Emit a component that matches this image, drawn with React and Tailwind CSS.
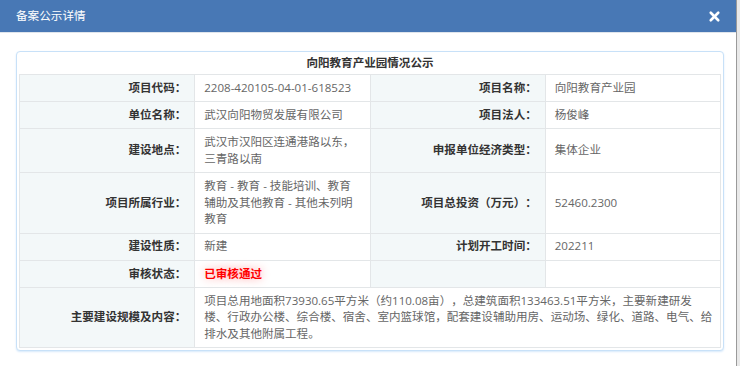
import { X } from 'lucide-react';

const rows = [
  [
    { label: '项目代码：', value: '2208-420105-04-01-618523' },
    { label: '项目名称：', value: '向阳教育产业园' },
  ],
  [
    { label: '单位名称：', value: '武汉向阳物贸发展有限公司' },
    { label: '项目法人：', value: '杨俊峰' },
  ],
  [
    { label: '建设地点：', value: '武汉市汉阳区连通港路以东，三青路以南' },
    { label: '申报单位经济类型：', value: '集体企业' },
  ],
  [
    { label: '项目所属行业：', value: '教育 - 教育 - 技能培训、教育辅助及其他教育 - 其他未列明教育' },
    { label: '项目总投资（万元）：', value: '52460.2300' },
  ],
  [
    { label: '建设性质：', value: '新建' },
    { label: '计划开工时间：', value: '202211' },
  ],
];

const labelCls =
  'border border-[#e3e6e8] bg-[#f3f8f9] px-[8px] py-[4.8px] text-right font-bold text-[#333] align-middle';
const valueCls =
  'border border-[#e3e6e8] bg-white pl-[9px] pr-[15px] py-[4.8px] text-left text-[#666] align-middle';

export default function App() {
  return (
    <div
      className="flex h-[366px] w-[740px] bg-[#e9e9e9] text-[11.55px] leading-[16.6px] [text-spacing-trim:space-all]"
      style={{ fontFamily: '"Open Sans", "Noto Sans CJK SC", sans-serif' }}
    >
      <div className="flex h-full w-[737px] flex-col border-r border-[#9a9a9a] bg-white">
        {/* Header */}
        <div className="flex h-[33px] shrink-0 items-center justify-between border-b border-[#dfe5ec] bg-[#4878b5] pl-[16px] pr-[14px]">
          <span className="text-[11.6px] text-white">备案公示详情</span>
          <X className="h-[15px] w-[15px] text-white" strokeWidth={4.2} />
        </div>

        {/* Body */}
        <div className="pl-[16px] pt-[18px]">
          <div className="w-[708px] rounded-[4px] border border-[#c8e1f8] bg-white px-[2px] pb-[2px] shadow-[0_1px_2px_#d7e9fb]">
            <div className="flex h-[22px] items-center justify-center font-bold text-[#333]">
              向阳教育产业园情况公示
            </div>
            <table className="w-[702px] table-fixed border-collapse">
              <tbody>
                {rows.map((r, i) => (
                  <tr key={i}>
                    <td className={labelCls}>{r[0].label}</td>
                    <td className={valueCls}>{r[0].value}</td>
                    <td className={labelCls}>{r[1].label}</td>
                    <td className={valueCls}>{r[1].value}</td>
                  </tr>
                ))}
                <tr>
                  <td className={labelCls}>审核状态：</td>
                  <td className={valueCls}>
                    <span className="font-bold text-[#ff0000] [text-shadow:0_0_10px_#ff9a9a]">
                      已审核通过
                    </span>
                  </td>
                  <td className={labelCls}></td>
                  <td className={valueCls}></td>
                </tr>
                <tr>
                  <td className={labelCls}>主要建设规模及内容：</td>
                  <td
                    className="border border-[#e3e6e8] bg-white py-[4.8px] pl-[9px] pr-0 text-left align-middle text-[#666]"
                    colSpan={3}
                  >
                    <div className="w-[510px]">
                      项目总用地面积73930.65平方米（约110.08亩），总建筑面积133463.51平方米，主要新建研发楼、行政办公楼、综合楼、宿舍、室内篮球馆，配套建设辅助用房、运动场、绿化、道路、电气、给排水及其他附属工程。
                    </div>
                  </td>
                </tr>
              </tbody>
            </table>
          </div>
        </div>
      </div>
    </div>
  );
}
